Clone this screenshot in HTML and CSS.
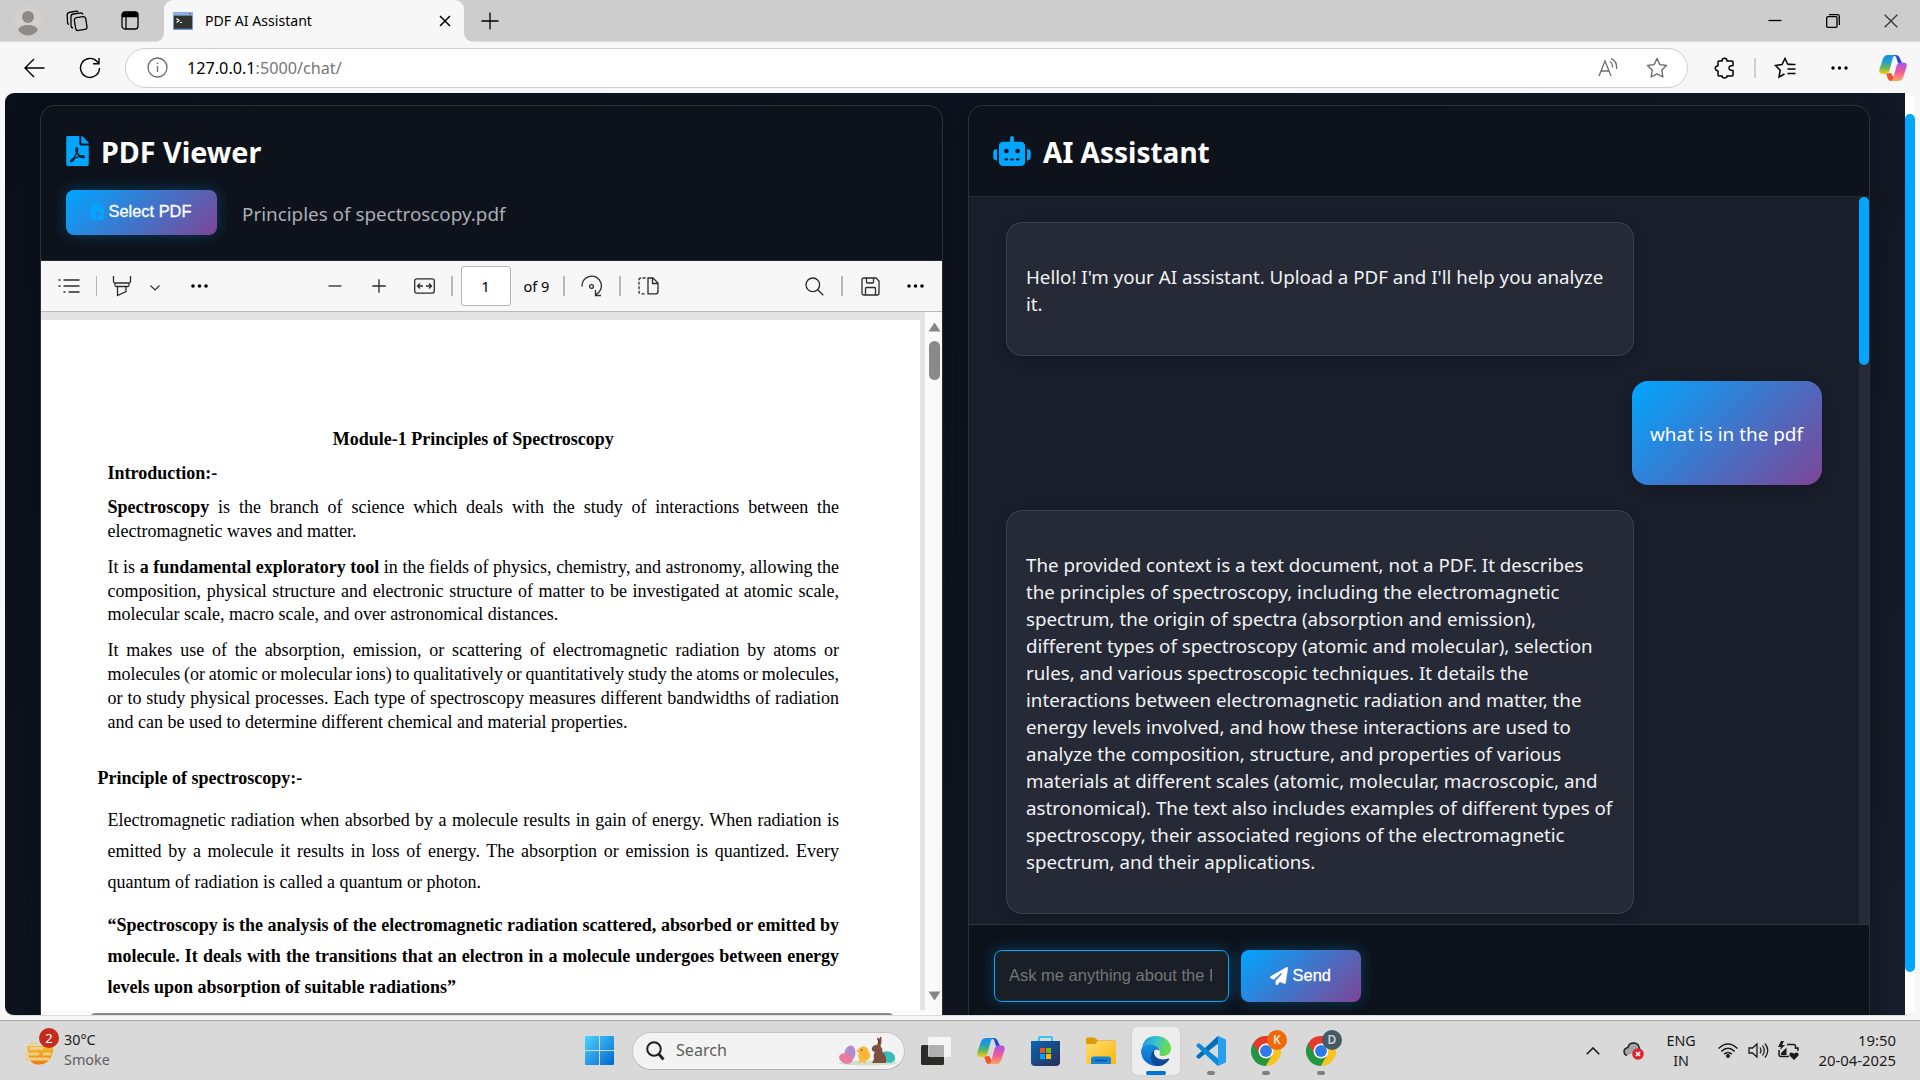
FILE: index.html
```
<!DOCTYPE html>
<html lang="en">
<head>
<meta charset="utf-8">
<title>PDF AI Assistant</title>
<link rel="stylesheet" href="styles.css">
</head>
<body>
<svg class="defs" width="0" height="0">
  <defs>
    <linearGradient id="cpA" x1="0" y1="0" x2="0" y2="1"><stop offset="0" stop-color="#1a8ce8"/><stop offset=".35" stop-color="#1f9fd0"/><stop offset=".65" stop-color="#5fb85a"/><stop offset="1" stop-color="#f6cc14"/></linearGradient>
    <linearGradient id="cpB" x1="0" y1="0" x2="0" y2="1"><stop offset="0" stop-color="#a455ee"/><stop offset=".5" stop-color="#ee5a9a"/><stop offset="1" stop-color="#fba45c"/></linearGradient>
    <linearGradient id="win" x1="0" y1="0" x2="1" y2="1"><stop offset="0" stop-color="#4fd2ff"/><stop offset="1" stop-color="#0067cf"/></linearGradient>
    <linearGradient id="fold" x1="0" y1="0" x2="1" y2="1"><stop offset="0" stop-color="#ffdc72"/><stop offset="1" stop-color="#f8b80c"/></linearGradient>
    <linearGradient id="store" x1="0" y1="0" x2="1" y2="1"><stop offset="0" stop-color="#0a66b4"/><stop offset="1" stop-color="#292e52"/></linearGradient>
    <linearGradient id="edgeTop" x1="0" y1="0" x2="1" y2=".3"><stop offset="0" stop-color="#1690dc"/><stop offset=".5" stop-color="#34c3d0"/><stop offset="1" stop-color="#6bdc4c"/></linearGradient>
    <linearGradient id="edgeMid" x1="0" y1="0" x2="0" y2="1"><stop offset="0" stop-color="#1a8ee0"/><stop offset="1" stop-color="#0668c8"/></linearGradient>
    <linearGradient id="sun" x1="0" y1="0" x2="0" y2="1"><stop offset="0" stop-color="#f6b92c"/><stop offset="1" stop-color="#ee7a12"/></linearGradient>
    <symbol id="copilot" viewBox="0 0 28 28">
      <path d="M17 2.500 19 9 23 9 20.500 3.500Q19.500 1 17 1H11z" fill="#1c49cf"/>
      <path d="M7 19.500 9 25Q9.800 27 12 27H17L12 19z" fill="#f0532d"/>
      <path d="M9 1H16.500Q14.500 1.300 13.800 4L10.500 16.500Q9.700 20 6 20H3.500Q-.5 20 .4 15.500L4 4.500Q5.300 1 9 1z" fill="url(#cpA)"/>
      <path d="M19 27H11.500Q13.500 26.700 14.200 24L17.500 12Q18.300 8.500 22 8.500H24.500Q28.500 8.500 27.600 13L24 23.500Q22.700 27 19 27z" fill="url(#cpB)"/>
    </symbol>
    <symbol id="chrome" viewBox="0 0 48 48">
      <path d="M24 24 34.400 30 24 48A24 24 0 0 1 3.200 12z" fill="#22973f"/>
      <path d="M24 12H44.800A24 24 0 0 1 24 48L34.400 30z" fill="#fcc31e"/>
      <path d="M24 12H44.800A24 24 0 0 0 3.200 12L13.600 30z" fill="#e33b2e"/>
      <circle cx="24" cy="24" r="12" fill="#fff"/><circle cx="24" cy="24" r="9.500" fill="#2f78ea"/>
    </symbol>
  </defs>
</svg>

<header class="tabstrip">
  <span class="cell avatar"><svg width="28" height="30" viewBox="0 0 28 30"><ellipse cx="14" cy="15" rx="13.500" ry="14.500" fill="#d4d0cd"/><circle cx="14" cy="11" r="6" fill="#8f8a86"/><path d="M4 24Q6 19 14 19T24 24Q20 29.500 14 29.500T4 24z" fill="#8f8a86"/></svg></span>
  <span class="cell work"><svg width="22" height="22" viewBox="0 0 22 22" class="line"><rect x="9" y="7" width="11.500" height="13" rx="2.500" transform="rotate(-9 15 14)"/><path d="M7 18Q5 17.500 5 15.500L5 6.500Q5 4.500 7 4L15 2.800Q16.500 2.800 17 4.500M3 14.500Q1.500 14 1.500 12.500L1.200 4.500Q1.200 3 3 2.500L10 1.200Q11.500 1 12 2"/></svg></span>
  <span class="cell vtabs"><svg width="18" height="19" viewBox="0 0 18 19" class="line"><rect x="1" y="1" width="16" height="17" rx="3"/><path d="M1.500 3Q1.500 1.500 4 1.500H14Q16.500 1.500 16.500 3V5.500H1.500z" fill="#000"/><path d="M5 5V18"/></svg></span>
  <div class="tab">
    <svg width="20" height="18" viewBox="0 0 20 18"><rect width="20" height="18" rx="1" fill="#6f9bd4"/><rect y="0" width="20" height="3.500" fill="#89b1e6"/><rect x="16" y="1" width="2" height="1.500" fill="#e05050"/><rect x="1" y="3.700" width="18" height="13" fill="#333"/><path d="M3.500 6.500 6 8.500 3.500 10.500M7 10.500H9" stroke="#fff" fill="none" stroke-width="1.200"/></svg>
    <span class="tab-title">PDF AI Assistant</span>
    <svg width="12" height="12" viewBox="0 0 12 12" class="line"><path d="M1 1 11 11M11 1 1 11" stroke-width="1.500"/></svg>
  </div>
  <span class="cell newtab"><svg width="18" height="18" viewBox="0 0 18 18" class="line"><path d="M9 .5V17.500M.5 9H17.500"/></svg></span>
  <span class="controls">
    <svg width="14" height="14" viewBox="0 0 14 14" class="line"><path d="M.5 6.500H13.500"/></svg>
    <svg width="14" height="14" viewBox="0 0 14 14" class="line"><rect x=".7" y="2.700" width="10.300" height="10.600" rx="1"/><path d="M3 .7H11.500Q13.300 .7 13.300 2.500V11"/></svg>
    <svg width="14" height="14" viewBox="0 0 14 14" class="line"><path d="M.7 .7 13.300 13.300M13.300 .7 .7 13.300" stroke="#333"/></svg>
  </span>
</header>

<nav class="navbar">
  <span class="nav back"><svg width="21" height="20" viewBox="0 0 21 20" class="line"><path d="M20.500 10H1M10 1 1 10 10 19" stroke-width="1.400"/></svg></span>
  <span class="nav reload"><svg width="22" height="22" viewBox="0 0 22 22" class="line"><path d="M20.500 11A9.500 9.500 0 1 1 18 4.500L20 6.500M20 1V6.700H14" stroke-width="1.400"/></svg></span>
  <div class="address">
    <svg width="21" height="21" viewBox="0 0 21 21" class="line grey"><circle cx="10.500" cy="10.500" r="9.500"/><path d="M10.500 9V15M10.500 5.500V7"/></svg>
    <span class="url"><b>127.0.0.1</b>:5000/chat/</span>
    <svg class="aloud line grey" width="20" height="20" viewBox="0 0 20 20"><path d="M1 18 7 3 13 18M3 13H11M12 3.500Q15 5.500 14.500 9.500M13 .7Q19.500 3.500 18.500 11"/></svg>
    <svg class="line grey" width="22" height="22" viewBox="0 0 22 22"><path d="M11 1.500 13.900 7.600 20.500 8.500 15.700 13.200 16.900 20 11 16.800 5.100 20 6.300 13.200 1.500 8.500 8.100 7.600z" stroke-linejoin="round" stroke-width="1.400"/></svg>
  </div>
  <span class="nav ext"><svg width="22" height="22" viewBox="0 0 22 22" class="line"><path d="M5 4H8Q8 1.300 10.500 1.300T13 4H18Q19 4 19 5V8.500Q15 8.500 15 11T19 13.500V18Q19 19 18 19H13Q13 21 10.500 21T8 19H5Q4 19 4 18V14Q1.300 13.500 1.300 11.300T4 8.700V5Q4 4 5 4z" stroke-width="1.500"/></svg></span>
  <i class="nav-sep"></i>
  <span class="nav favs"><svg width="22" height="22" viewBox="0 0 22 22" class="line"><path d="M19 7.500 13.600 7 11 1.500 8 7.500 1.500 8.500 6.200 13.200 5 20 10.500 17M14 7.500H21.500M13.500 12H21.500M13.500 16.500H21.500" stroke-width="1.500"/></svg></span>
  <span class="nav more"><svg width="17" height="4" viewBox="0 0 17 4"><circle cx="2" cy="2" r="1.700"/><circle cx="8.500" cy="2" r="1.700"/><circle cx="15" cy="2" r="1.700"/></svg></span>
  <span class="nav cop"><svg width="28" height="28"><use href="#copilot"/></svg></span>
</nav>

<div class="frame">
  <div class="viewport">
    <main class="app">
      <section class="panel viewer">
        <div class="head">
          <h2><svg class="brand" width="23" height="30" viewBox="0 0 384 512"><path d="M181.900 256.100c-5-16-4.900-46.900-2-46.900 8.400 0 7.600 36.900 2 46.900zm-1.700 47.200c-7.700 20.200-17.300 43.300-28.400 62.700 18.300-7 39-17.200 62.900-21.900-12.700-9.600-24.900-23.400-34.500-40.800zM86.100 428.100c0 .8 13.200-5.400 34.900-40.200-6.700 6.300-29.100 24.500-34.900 40.200zM248 160h136v328c0 13.300-10.700 24-24 24H24c-13.300 0-24-10.700-24-24V24C0 10.700 10.700 0 24 0h200v136c0 13.200 10.800 24 24 24zm-8 171.800c-20-12.200-33.300-29-42.700-53.800 4.500-18.500 11.600-46.600 6.200-64.200-4.700-29.400-42.400-26.500-47.800-6.800-5 18.300-.4 44.100 8.100 77-11.600 27.600-28.700 64.600-40.800 85.800-.1 0-.1.100-.2.100-27.100 13.900-73.600 44.500-54.500 68 5.600 6.900 16 10 21.500 10 17.900 0 35.700-18 61.100-61.800 25.800-8.500 54.100-19.100 79-23.200 21.700 11.800 47.100 19.500 64 19.500 29.200 0 31.200-32 19.700-43.400-13.900-13.600-54.300-9.700-73.600-7.200zM377 105L279 7c-4.500-4.500-10.600-7-17-7h-6v128h128v-6.100c0-6.300-2.500-12.400-7-16.900zm-74.100 255.300c4.100-2.700-2.500-11.900-42.800-9 37.100 15.800 42.800 9 42.800 9z"/></svg>PDF Viewer</h2>
          <div class="pick">
            <button class="btn select"><svg class="brand" width="13" height="17" viewBox="0 0 384 512"><path fill-rule="evenodd" d="M224 136V0H24C10.700 0 0 10.700 0 24v464c0 13.300 10.700 24 24 24h336c13.300 0 24-10.700 24-24V160H248c-13.200 0-24-10.800-24-24zm65.200 216H224v80c0 8.800-7.200 16-16 16h-32c-8.800 0-16-7.200-16-16v-80H94.800c-14.300 0-21.400-17.300-11.300-27.400l96.400-95.700c6.700-6.600 17.400-6.600 24 0l96.400 95.700c10.200 10.100 3 27.400-11.100 27.400zM377 105L279 7c-4.500-4.500-10.600-7-17-7h-6v128h128v-6c0-6.400-2.500-12.500-7-17z"/></svg>Select PDF</button>
            <span class="filename">Principles of spectroscopy.pdf</span>
          </div>
        </div>

        <div class="pdfbar">
          <span class="t-list"><svg width="22" height="16" viewBox="0 0 22 16" class="ink"><path d="M5.500 2H21.500M5.500 8H21.500M10.500 14H21.500M.5 2H2.500M.5 8H2.500M5.500 14H7.500" stroke-width="1.600"/></svg></span>
          <i></i>
          <span class="t-mark"><svg width="20" height="22" viewBox="0 0 20 22" class="ink"><path d="M1.500 1V6.500Q1.500 8 3 8H17Q18.500 8 18.500 6.500V1M3 8V10Q3 11.500 4.500 11.500H15.500Q17 11.500 17 10V8M5.500 11.500V20.500L14 16.500V11.500"/></svg></span>
          <span class="t-chev"><svg width="10" height="6" viewBox="0 0 10 6" class="ink"><path d="M.5 .5 5 5 9.500 .5" stroke-width="1.100"/></svg></span>
          <span class="t-dots"><svg width="17" height="4" viewBox="0 0 17 4"><circle cx="2" cy="2" r="1.800"/><circle cx="8.500" cy="2" r="1.800"/><circle cx="15" cy="2" r="1.800"/></svg></span>
          <span class="t-minus"><svg width="14" height="14" viewBox="0 0 14 14" class="ink"><path d="M.5 7H13.500"/></svg></span>
          <span class="t-plus"><svg width="14" height="14" viewBox="0 0 14 14" class="ink"><path d="M.3 7H13.700M7 .3V13.700"/></svg></span>
          <span class="t-fit"><svg width="21" height="16" viewBox="0 0 21 16" class="ink"><rect x=".7" y=".9" width="19.600" height="14.200" rx="2"/><path d="M9 8H3.500M6 5.500 3.500 8 6 10.500M12 8H17.500M15 5.500 17.500 8 15 10.500"/></svg></span>
          <i class="wide"></i>
          <span class="t-page"><span class="pageno">1</span></span>
          <span class="t-of">of 9</span>
          <i class="wide"></i>
          <span class="t-rot"><svg width="22" height="22" viewBox="0 0 22 22" class="ink"><path d="M1 11.500A9.700 9.700 0 1 1 15 19.500M14.500 15V20.500H20"/><circle cx="10.500" cy="11.500" r="1.900"/></svg></span>
          <i class="wide"></i>
          <span class="t-fit"><svg width="21" height="18" viewBox="0 0 21 18" class="ink"><path d="M10 1H15L20 6V14.500Q20 16.800 18 16.800H10zM14.500 1V6.500H20"/><path d="M7.500 1H3Q1 1 1 3V15Q1 16.800 3 16.800H7.500" stroke-dasharray="3 1.500"/></svg></span>
          <span class="t-find"><svg width="19" height="19" viewBox="0 0 19 19" class="ink"><circle cx="7.800" cy="7.800" r="6.800"/><path d="M12.700 12.700 18.300 18.300"/></svg></span>
          <i class="wide"></i>
          <span class="t-save"><svg width="19" height="19" viewBox="0 0 19 19" class="ink"><path d="M1 3Q1 1 3 1H15L18 4V16Q18 18 16 18H3Q1 18 1 16zM4.500 18V11.500Q4.500 10.500 5.500 10.500H13.500Q14.500 10.500 14.500 11.500V18M5.500 1V5Q5.500 6 6.500 6H11.500Q12.500 6 12.500 5V1"/></svg></span>
          <span class="t-end"><svg width="17" height="4" viewBox="0 0 17 4"><circle cx="2" cy="2" r="1.800"/><circle cx="8.500" cy="2" r="1.800"/><circle cx="15" cy="2" r="1.800"/></svg></span>
        </div>

        <div class="pdfbody">
          <article class="page">
            <h3>Module-1 Principles of Spectroscopy</h3>
            <h4>Introduction:-</h4>
            <p><b>Spectroscopy</b> is the branch of science which deals with the study of interactions between the electromagnetic waves and matter.</p>
            <p>It is <b>a fundamental exploratory tool</b> in the fields of physics, chemistry, and astronomy, allowing the composition, physical structure and electronic structure of matter to be investigated at atomic scale, molecular scale, macro scale, and over astronomical distances.</p>
            <p><span class="full">It makes use of the absorption, emission, or scattering of electromagnetic radiation by atoms or</span><span class="full tight">molecules (or atomic or molecular ions) to qualitatively or quantitatively study the atoms or molecules,</span><span class="full">or to study physical processes. Each type of spectroscopy measures different bandwidths of radiation</span>and can be used to determine different chemical and material properties.</p>
            <h4 class="out">Principle of spectroscopy:-</h4>
            <p class="loose">Electromagnetic radiation when absorbed by a molecule results in gain of energy. When radiation is emitted by a molecule it results in loss of energy. The absorption or emission is quantized. Every quantum of radiation is called a quantum or photon.</p>
            <p class="loose"><b><span class="full tight">“Spectroscopy is the analysis of the electromagnetic radiation scattered, absorbed or emitted by</span><span class="full tight">molecule. It deals with the transitions that an electron in a molecule undergoes between energy</span>levels upon absorption of suitable radiations”</b></p>
          </article>
          <div class="vscroll"><svg width="13" height="10" viewBox="0 0 13 10"><path d="M6.500 .5 12.500 9.500H.5z"/></svg><i></i><svg width="13" height="10" viewBox="0 0 13 10"><path d="M6.500 9.500 12.500 .5H.5z"/></svg></div>
        </div>
        <div class="hscroll"><i></i></div>
      </section>

      <section class="panel chat">
        <div class="head">
          <h2><svg class="brand" width="38" height="30" viewBox="0 0 640 512"><path d="M320 0c17.700 0 32 14.300 32 32V96H472c39.800 0 72 32.200 72 72V440c0 39.800-32.200 72-72 72H168c-39.800 0-72-32.200-72-72V168c0-39.800 32.200-72 72-72H288V32c0-17.700 14.300-32 32-32zM208 384c-8.800 0-16 7.200-16 16s7.200 16 16 16h32c8.800 0 16-7.200 16-16s-7.200-16-16-16H208zm96 0c-8.800 0-16 7.200-16 16s7.200 16 16 16h32c8.800 0 16-7.200 16-16s-7.200-16-16-16H304zm96 0c-8.800 0-16 7.200-16 16s7.200 16 16 16h32c8.800 0 16-7.200 16-16s-7.200-16-16-16H400zM264 256a40 40 0 1 0 -80 0 40 40 0 1 0 80 0zm152 40a40 40 0 1 0 0-80 40 40 0 1 0 0 80zM48 224H64V416H48c-26.500 0-48-21.500-48-48V272c0-26.500 21.500-48 48-48zm544 0c26.500 0 48 21.500 48 48v96c0 26.500-21.500 48-48 48H576V224h16z"/></svg>AI Assistant</h2>
        </div>
        <div class="log">
          <div class="messages">
            <div class="msg bot">Hello! I'm your AI assistant. Upload a PDF and I'll help you analyze it.</div>
            <div class="msg user">what is in the pdf</div>
            <div class="msg bot">The provided context is a text document, not a PDF. It describes<br>the principles of spectroscopy, including the electromagnetic<br>spectrum, the origin of spectra (absorption and emission),<br>different types of spectroscopy (atomic and molecular), selection<br>rules, and various spectroscopic techniques. It details the<br>interactions between electromagnetic radiation and matter, the<br>energy levels involved, and how these interactions are used to<br>analyze the composition, structure, and properties of various<br>materials at different scales (atomic, molecular, macroscopic, and<br>astronomical). The text also includes examples of different types of<br>spectroscopy, their associated regions of the electromagnetic<br>spectrum, and their applications.</div>
          </div>
          <div class="logscroll"><i></i></div>
        </div>
        <div class="composer">
          <input type="text" placeholder="Ask me anything about the PDF...">
          <button class="btn send"><svg width="18" height="18" viewBox="0 0 512 512"><path d="M498.100 5.600c10.100 7 15.400 19.100 13.500 31.200l-64 416c-1.500 9.700-7.400 18.200-16 23s-18.900 5.400-28 1.600L284 427.700l-68.500 74.100c-8.900 9.700-22.900 12.900-35.200 8.100S160 493.200 160 480V396.400c0-4 1.500-7.800 4.200-10.700L331.800 202.800c5.800-6.300 5.600-16-.4-22s-15.700-6.400-22-.7L106 360.800 17.700 316.600C7.100 311.300 .3 300.700 0 288.900s5.900-22.800 16.100-28.700l448-256c10.700-6.100 23.900-5.500 34 1.400z"/></svg>Send</button>
        </div>
      </section>
    </main>
    <div class="pagescroll"><i></i></div>
  </div>
</div>

<footer class="taskbar">
  <div class="weather">
    <span class="wicon"><svg width="34" height="36" viewBox="0 0 34 36"><path d="M3 16H29Q30 22 26.500 28T15.500 34.500 5.500 29z" fill="url(#sun)"/><path d="M7 13.500H12M7 18.500H18M2 24H14M20 24H26M2 29H24" stroke="#ecd085" stroke-width="3" stroke-linecap="round"/></svg><em>2</em></span>
    <span class="wtext"><b>30°C</b><br>Smoke</span>
  </div>
  <div class="dock">
    <svg class="start" width="29" height="29" viewBox="0 0 29 29"><path d="M1 0H14V14H0V1Q0 0 1 0zM15 0H28Q29 0 29 1V14H15zM0 15H14V29H1Q0 29 0 28zM15 15H29V28Q29 29 28 29H15z" fill="url(#win)"/></svg>
    <div class="search">
      <svg width="19" height="20" viewBox="0 0 19 20" fill="none" stroke="#222" stroke-width="2"><circle cx="8" cy="8" r="6.800"/><path d="M12.800 13 17.500 18.500" stroke-width="2.800"/></svg>
      <span>Search</span>
      <svg width="60" height="32" viewBox="0 0 60 32"><ellipse cx="31" cy="28" rx="29" ry="2.500" fill="#cfe0ce"/><ellipse cx="13" cy="18.500" rx="5.500" ry="8" fill="#b18ccf" transform="rotate(10 13 18)"/><ellipse cx="9" cy="23.500" rx="7" ry="5" fill="#ec7ba4" transform="rotate(20 9 23)"/><ellipse cx="51" cy="22" rx="7.500" ry="5.500" fill="#35bdb8" transform="rotate(20 51 22)"/><path d="M19 16 21.500 14Q23 11 27 11.500T31 16Q34 19 33 22T28 26L29 28H26L25 26 23 28H21L23 25Q20 23 22 18z" fill="#fbb73c"/><circle cx="24.500" cy="15" r=".8" fill="#422"/><path d="M35 13Q36 9.500 40 10L42.500 3Q44 0 44.500 3 45 7 43.500 11 46 14 45.500 17 50 21 49 28H35L37 24Q36 19 38 17 34 16 35 13z" fill="#7d4f3e"/><path d="M42 9 40 3.500Q40 2 41.500 3.500L43 7z" fill="#5f382b"/></svg>
    </div>
    <svg class="task" width="30" height="28" viewBox="0 0 30 28"><rect y="8" width="23" height="20" rx="1.500" fill="#2b2b29"/><rect x="7" y="0" width="23" height="20" rx="1.500" fill="#fff" opacity=".72"/><path d="M8 8H23V20H8z" fill="#999" opacity=".45"/></svg>
    <svg class="cpl" width="30" height="28"><use href="#copilot"/></svg>
    <svg class="stor" width="29" height="30" viewBox="0 0 29 30"><path d="M8 6V2Q8 1 9 1H20Q21 1 21 2V6" fill="none" stroke="#31c6f3" stroke-width="2"/><path d="M0 5H29V26Q29 30 25 30H4Q0 30 0 26z" fill="url(#store)"/><path d="M9 12H14V17H9z" fill="#f25022"/><path d="M15 12H20V17H15z" fill="#7fba00"/><path d="M9 18H14V23H9z" fill="#00a4ef"/><path d="M15 18H20V23H15z" fill="#ffb900"/></svg>
    <svg class="fold" width="30" height="27" viewBox="0 0 30 27"><path d="M0 2Q0 .5 1.500 .5H8.500L12 3.500H29Q30 3.500 30 5V8H0z" fill="#dc9b07"/><path d="M0 7H9L12 4H30V27H0z" fill="url(#fold)"/><path d="M5 27V22Q5 19.500 7.500 19.500H22.500Q25 19.500 25 22V27z" fill="#1782d8"/><path d="M9 23.500H21" stroke="#0b4f94" stroke-width="1.400"/></svg>
    <span class="tile"><svg width="30" height="30" viewBox="0 0 30 30"><path d="M1 12Q3 0 15 0C24 0 30 6 30 12.500 30 17.500 26 20 21.500 20 17.500 20 18.500 18 19 16 19.500 12 15 9 10 9 5 9 1.500 12 0 16z" fill="url(#edgeTop)"/><path d="M0 15C1 10 5 8.500 9 8.500 15 8.500 19 12 18.500 15.500L17.500 14Q11 12.500 10.500 19.500 10.500 26 18 29.700A15 15 0 0 1 0 15z" fill="url(#edgeMid)"/><path d="M10 19.500Q10.500 15 14 13.500 11.500 17 15 21T27.500 22.500Q29 23 27.500 24.500 22 31 15.500 30 9 27 10 19.500z" fill="#0d4b94"/></svg><i></i></span>
    <span class="app-ico code"><svg width="30" height="30" viewBox="0 0 30 30"><path d="M22 0 29 3Q30 3.500 30 5V25Q30 26.500 29 27L22 30V0z" fill="#26a0ee"/><path d="M22 7.500 3.500 22.500Q2.700 23 2 22.500L.5 21Q0 20.300 .6 19.700L21 .8Q22 0 22 0z" fill="#0070bb"/><path d="M22 22.500 3.500 7.500Q2.700 7 2 7.500L.5 9Q0 9.700 .6 10.300L21 29.200 22 30z" fill="#0c8ad6"/></svg><i></i></span>
    <span class="app-ico c1"><svg width="30" height="30"><use href="#chrome"/></svg><em>K</em><i></i></span>
    <span class="app-ico c2"><svg width="30" height="30"><use href="#chrome"/></svg><em class="slate">D</em><i></i></span>
  </div>
  <div class="tray">
    <svg class="up" width="14" height="8" viewBox="0 0 14 8" fill="none" stroke="#1b1b1b" stroke-width="1.600"><path d="M.7 7.300 7 1 13.300 7.300"/></svg>
    <svg class="cloud" width="21" height="18" viewBox="0 0 21 18"><path d="M4 13.500Q1 12.500 1 9.500T5 5.500Q6 1 10.500 1T16 5L17 8" fill="#a5a5a5" stroke="#222" stroke-width="1.500"/><circle cx="15" cy="12" r="5.800" fill="#d92630"/><path d="M13 10 17 14M17 10 13 14" stroke="#fff" stroke-width="1.600"/></svg>
    <span class="lang">ENG<br>IN</span>
    <svg class="wifi" width="20" height="15" viewBox="0 0 20 15" fill="none" stroke="#1b1b1b" stroke-width="1.400"><path d="M.5 5.500Q10-3.500 19.500 5.500M3.300 8.500Q10 2 16.700 8.500M6 11.300Q10 7.500 14 11.300"/><circle cx="10" cy="13" r="1.300" fill="#1b1b1b"/></svg>
    <svg class="vol" width="21" height="17" viewBox="0 0 21 17" fill="none" stroke="#1b1b1b" stroke-width="1.300"><path d="M1 6H4.500L9 2V15L4.500 11H1zM12 5.500Q14 8.500 12 11.500M14.500 3.500Q18 8.500 14.500 13.500M17 1.500Q22.500 8.500 17 15.500"/></svg>
    <svg class="batt" width="21" height="19" viewBox="0 0 21 19"><path d="M9 3.500H15.500Q17.500 3.500 17.500 5.500V8M11 15.500H3Q1 15.500 1 13.500V9M18 7H20V10" fill="none" stroke="#1b1b1b" stroke-width="1.500"/><path d="M3 0 0 6H3L2 9 7 4H4L6 0zM8.500 6.500V14H3V12zM16 19 11.500 14.500Q11 11.500 13.500 11.500 15.500 11.500 16 13 16.500 11.500 18.500 11.500 21 11.500 20.500 14.500z" fill="#1b1b1b"/></svg>
    <span class="clock">19:50<br>20-04-2025</span>
  </div>
</footer>
</body>
</html>
```
FILE: styles.css
```
* { box-sizing: border-box; }
body {
  margin: 0; width: 1920px; height: 1080px; overflow: hidden;
  display: flex; flex-direction: column;
  background: #f7f7f7; color: #000;
  font-family: "Noto Sans", "Open Sans", sans-serif;
}
svg { display: block; flex: none; }
.defs { position: absolute; }
.line { fill: none; stroke: #000; stroke-width: 1.3; }
.line.grey { stroke: #6b6b6b; }
i { display: block; flex: none; }

/* tab strip */
.tabstrip { height: 42px; flex: none; background: #cdcdcd; display: flex; align-items: center; border-bottom: 1px solid #dcdcdc; }
.cell { display: flex; justify-content: center; flex: none; }
.avatar { width: 28px; margin-left: 14px; }
.work { width: 22px; margin-left: 24px; }
.vtabs { width: 18px; margin-left: 33px; }
.tab {
  position: relative; width: 300px; height: 42px; margin-left: 25px; padding: 0 13px 0 9px;
  background: #f7f7f7; border-radius: 9px 9px 0 0; display: flex; align-items: center;
}
.tab::before, .tab::after { content: ""; position: absolute; bottom: 0; width: 9px; height: 9px; }
.tab::before { left: -9px; background: radial-gradient(circle at 0 0, transparent 8.500px, #f7f7f7 9px); }
.tab::after { right: -9px; background: radial-gradient(circle at 100% 0, transparent 8.500px, #f7f7f7 9px); }
.tab-title { font-size: 14.100px; margin: 0 auto 0 12px; }
.newtab { width: 18px; margin-left: 17px; }
.controls { margin-left: auto; display: flex; gap: 44px; padding-right: 22px; }

/* address bar */
.navbar { height: 51px; flex: none; display: flex; align-items: center; }
.navbar > * { flex: none; }
.nav { display: flex; justify-content: center; }
.back { width: 21px; margin-left: 24px; }
.reload { width: 22px; margin-left: 34px; }
.address {
  width: 1563px; height: 40px; margin-left: 24px; padding: 0 19px 0 21px;
  background: #fff; border: 1px solid #cfcfcf; border-radius: 20px; display: flex; align-items: center;
}
.url { font-size: 16.200px; margin-left: 19px; color: #767676; }
.url b { font-weight: 400; color: #000; }
.aloud { margin-left: auto; margin-right: 28px; }
.ext { width: 22px; margin-left: 26px; }
.nav-sep { width: 2px; height: 20px; margin-left: 18px; background: #d0d0d0; }
.favs { width: 22px; margin-left: 18px; }
.more { width: 17px; margin-left: 35px; }
.cop { width: 28px; margin-left: 31px; }

/* page frame */
.frame { height: 927px; flex: none; padding: 0 5px 4px; }
.viewport { height: 923px; border-radius: 9px; overflow: hidden; display: flex; border-bottom: 1px solid #ddd; }
.app {
  width: 1900px; flex: none; height: 923px; padding: 12px 35px 0; display: flex; gap: 25px; overflow: hidden;
  background: linear-gradient(135deg, #0b0f1a 0%, #101521 50%, #171d2b 100%);
}
.pagescroll { width: 10px; background: #fff; padding-top: 21px; }
.pagescroll i { height: 858px; border-radius: 5px; background: #00a6ff; }
.panel {
  width: 903px; flex: none; height: 930px; display: flex; flex-direction: column; overflow: hidden;
  border: 1px solid rgba(255,255,255,.13); border-radius: 15px; background: #0d121b;
  box-shadow: 0 8px 32px rgba(0,0,0,.3);
}
.chat { width: 902px; }
.head { flex: none; padding: 25px; border-bottom: 1px solid rgba(255,255,255,.1); }
.viewer .head { height: 155px; }
.chat .head { height: 91px; padding-left: 24px; }
h2 { margin: 0; height: 42px; display: flex; align-items: center; gap: 12px; color: #fff; font-size: 28px; font-weight: 700; line-height: 42px; }
h2 .brand { margin-bottom: 3px; }
.viewer h2 { font-size: 28.700px; }
.brand { fill: #00a6ff; }
.pick { display: flex; align-items: flex-start; gap: 25px; margin-top: 17px; }
.btn {
  border: 0; border-radius: 8px; background: linear-gradient(135deg, #00a6ff, #7e4596);
  box-shadow: 0 0 15px rgba(0,166,255,.3); color: #fff; fill: #fff; -webkit-text-stroke: .3px #fff;
  font: 16.400px "Liberation Sans", sans-serif; display: flex; align-items: center; justify-content: center; gap: 5px; padding: 0;
}
.select { width: 151px; height: 45px; padding: 0 1px 2px 0; }
.filename { font-size: 18.850px; line-height: 48px; color: #abaeb6; }

/* document toolbar */
.pdfbar { height: 51px; flex: none; background: #f7f7f7; border-bottom: 1px solid #b9b9b9; display: flex; align-items: center; }
.pdfbar > span { display: flex; flex: none; justify-content: center; align-items: center; }
.pdfbar > i { width: 1px; height: 20px; background: #b5b5b5; }
.pdfbar > i.wide { width: 2px; margin: 0 4px; background: #b8b8b8; }
.ink { fill: none; stroke: #2b2b2b; stroke-width: 1.300; }
.t-list { width: 55px; }
.t-mark { width: 50px; }
.t-chev { width: 16px; padding-top: 4px; }
.t-dots { width: 73px; }
.t-minus { width: 44px; margin-left: 77px; }
.t-plus { width: 44px; }
.t-fit, .t-rot, .t-find { width: 46px; }
.t-page { width: 57px; }
.pageno { width: 50px; height: 40px; background: #fff; border: 1px solid #b5b5b5; border-radius: 3px; font-size: 15px; line-height: 39px; text-align: center; }
.t-of { width: 45px; font-size: 14.500px; }
.t-find { margin-left: auto; }
.t-save { width: 47px; }
.t-end { width: 42px; margin-right: 6px; }

/* document */
.pdfbody { height: 698px; flex: none; display: flex; background: #e4e4e4; }
.page {
  width: 879px; margin-top: 8px; padding: 107px 81px 0 66.500px; overflow: hidden; background: #fff;
  font: 18px/23.800px "Liberation Serif", serif;
}
.page h3, .page h4 { margin: 0 0 10px; font-size: 18px; line-height: 24px; }
.page h3 { text-align: center; }
.page h4 + p { margin-top: 11px; }
.page p { margin: 0 0 12.200px; text-align: justify; }
.full { display: block; text-align-last: justify; white-space: nowrap; }
.tight { letter-spacing: -.03px; word-spacing: -1.400px; }
.page .out { margin: 31.600px 0 14.500px -10px; }
.page .out + p { margin-top: 0; }
.page .loose { line-height: 31px; }
.vscroll { width: 17px; margin-left: 5px; background: #fafafa; display: flex; flex-direction: column; align-items: center; padding: 10px 0 9px 1px; fill: #868686; }
.vscroll i { width: 11px; height: 39px; margin: 9px 0 auto; border-radius: 6px; background: #8a8a8a; }
.hscroll { height: 20px; flex: none; background: #fafafa; padding: 3px 0 0 50px; }
.hscroll i { width: 802px; height: 11px; border-radius: 4px; background: #8a8a8a; }

/* chat */
.log { height: 728px; flex: none; display: flex; background: #191e2b; border-bottom: 1px solid rgba(255,255,255,.1); }
.messages { width: 890px; flex: none; padding: 25px 37px 0; display: flex; flex-direction: column; gap: 25px; }
.msg { border-radius: 16px; font-size: 18.730px; line-height: 27px; color: #fff; box-shadow: 0 4px 15px rgba(0,0,0,.2); }
.bot { width: 628px; padding: 40px 0 38px 19px; background: #252a36; border: 1px solid rgba(255,255,255,.1); color: #f2f3f4; white-space: nowrap; }
.bot:first-child { white-space: normal; padding-right: 18px; }
.user { align-self: flex-end; width: 190px; height: 104px; padding-right: 1px; line-height: 106px; text-align: center; background: linear-gradient(135deg, #00a6ff, #7e4596); font-size: 18.900px; }
.logscroll { width: 10px; background: #252a36; }
.logscroll i { height: 168px; border-radius: 5px; background: #00a6ff; }
.composer { display: flex; gap: 12px; padding: 25px; }
.composer input {
  width: 235px; height: 52px; padding: 0 16px 1px 14px; border: 1px solid #00a6ff; border-radius: 8px; outline: 0;
  background: #1a1e27; box-shadow: 0 0 15px rgba(0,166,255,.3); color: #fff; font: 16.500px "Liberation Sans", sans-serif;
}
.composer input::placeholder { color: #757575; }
.send { width: 120px; height: 52px; padding: 0 1px 1px 0; gap: 4.500px; }

/* taskbar */
.taskbar { height: 60px; flex: none; display: flex; align-items: center; background: #d9d9d9; border-top: 1px solid #a9a9a9; color: #1b1b1b; font-size: 14.400px; line-height: 20px; }
.weather { width: 585px; padding-left: 24px; display: flex; align-items: center; }
.wicon { position: relative; margin-top: -6px; }
.wicon em { position: absolute; left: 15px; top: -2px; width: 20px; height: 20px; border-radius: 50%; background: #c42b1c; color: #fff; font-style: normal; font-size: 13px; text-align: center; }
.wtext { margin: -1px 0 0 6px; color: #5d5d5d; }
.wtext b { font-weight: 400; color: #1b1b1b; }
.dock { display: flex; align-items: center; height: 59px; }
.search { width: 273px; height: 38px; margin-left: 18px; padding: 0 7px 0 13px; border-radius: 19px; background: #f3f3f3; border: 1px solid #c4c4c4; border-bottom-color: #b0b0b0; display: flex; align-items: center; font-size: 16.100px; color: #5d5d5d; }
.search span { margin: 0 auto 1px 11px; }
.task { margin-left: 16px; }
.cpl { margin-left: 25px; }
.stor { margin-left: 25px; }
.fold { margin-left: 26px; }
.tile { position: relative; width: 48px; height: 48px; margin-left: 16px; border-radius: 5px; background: #ededed; box-shadow: 0 0 1px #aaa; display: flex; align-items: center; justify-content: center; }
.tile i { position: absolute; left: 14px; bottom: 0; width: 20px; height: 4px; border-radius: 2px; background: #0074d4; }
.app-ico { position: relative; width: 30px; }
.app-ico i { position: absolute; left: 11px; top: 35px; width: 8px; height: 4px; border-radius: 2px; background: #808080; }
.app-ico em { position: absolute; left: 16px; top: -6px; width: 20px; height: 20px; border-radius: 50%; background: #ee6a08; color: #fbe3cf; font-style: normal; font-weight: 600; font-size: 12px; text-align: center; }
.app-ico em.slate { background: #455a64; color: #c6d3d8; }
.code { margin-left: 16px; }
.c1, .c2 { margin-left: 25px; }
.tray { margin-left: auto; padding-right: 24px; display: flex; align-items: center; font-size: 14.850px; }
.cloud { margin-left: 23px; }
.lang { margin-left: 23px; width: 29px; text-align: center; font-size: 14.300px; white-space: nowrap; }
.wifi { margin-left: 22px; }
.vol { margin-left: 10px; }
.batt { margin-left: 9px; }
.clock { margin: -2px 0 0 20px; text-align: right; }
```
